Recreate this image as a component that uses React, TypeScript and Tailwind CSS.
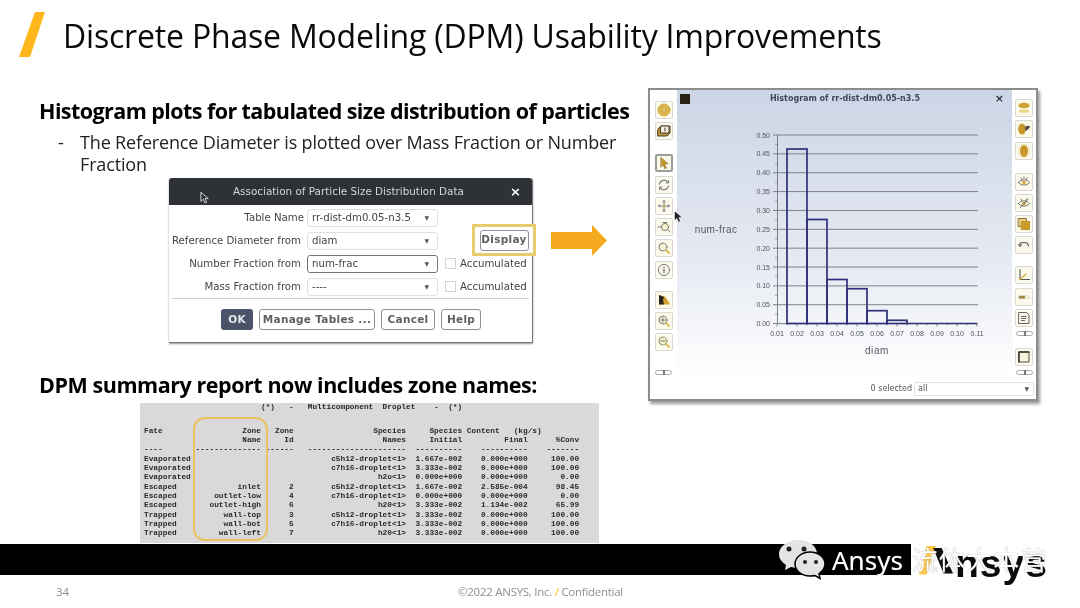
import type { ReactNode } from "react";

const gold = "#d9a92e";
const grey = "#7b7f7c";

function Ic({ children }: { children: ReactNode }) {
  return (
    <svg viewBox="0 0 14 14" className="h-[14px] w-[14px]" fill="none" strokeLinecap="round" strokeLinejoin="round">
      {children}
    </svg>
  );
}

const leftTools: ReactNode[][] = [
  [
    <Ic><circle cx="7" cy="7" r="6" fill="#e6c566" stroke={gold} /><circle cx="7" cy="7" r="2.5" stroke="#b98f28" strokeDasharray="1 1" /><circle cx="7" cy="7" r="4.6" stroke="#c49a30" strokeDasharray="1 1.2" /></Ic>,
    <Ic><path d="M1 5l3-3h9v7l-3 3H1z" fill="#b8922f" stroke="#4a4030" /><rect x="4" y="2" width="8" height="7" fill="#f6f3e4" stroke="#4a4030" /><path d="M8 4v3" stroke="#333" /></Ic>,
  ],
  [
    <Ic><path d="M4 1.5l7 6.3-3.3.3 1.7 4-1.6.6-1.7-4L4 11z" fill="#c9992c" stroke="#8c7130" strokeWidth=".6" /></Ic>,
    <Ic><path d="M2.5 6A4.6 4.6 0 0 1 11 4.5M11.5 8A4.6 4.6 0 0 1 3 9.5" stroke={grey} strokeWidth="1.2" /><path d="M11.5 2.5v2.4H9M2.5 11.5V9.1H5" stroke={grey} /></Ic>,
    <Ic><path d="M7 1.5v11M1.5 7h11M5.8 3L7 1.5 8.2 3M5.8 11L7 12.5 8.2 11M3 5.8L1.5 7 3 8.2M11 5.8L12.5 7 11 8.2" stroke={grey} /><circle cx="7" cy="7" r="1" fill={gold} /></Ic>,
    <Ic><circle cx="8" cy="7" r="3.6" stroke={grey} fill="#f7efc9" /><path d="M1 7h3M10.6 9.6l2.4 2.4M6 2.5h4" stroke={grey} /></Ic>,
    <Ic><circle cx="6" cy="6" r="4" stroke={grey} fill="#f6f0cf" /><path d="M9 9l3.2 3.2" stroke={gold} strokeWidth="1.4" /></Ic>,
    <Ic><circle cx="7" cy="7" r="5.6" stroke={grey} fill="#f8f6ea" /><path d="M7 6.2v3.6" stroke="#666" strokeWidth="1.2" /><circle cx="7" cy="4.2" r=".7" fill="#666" /></Ic>,
  ],
  [
    <Ic><path d="M2 2l6 1.5 4.5 6.5V11.5H2z" fill="#d2a02a" /><path d="M2 2l5 2-1 3 1 4.500H2z" fill="#2b2418" /></Ic>,
    <Ic><circle cx="6" cy="6" r="4" stroke={grey} fill="#f4eecb" /><path d="M4 6h4M6 4v4" stroke={grey} /><path d="M9 9l3.200 3.200" stroke={gold} strokeWidth="1.400" /></Ic>,
    <Ic><circle cx="6" cy="6" r="4" stroke="#8a9a6a" fill="#f4eecb" /><path d="M4 6h4" stroke={grey} /><path d="M9 9l3.200 3.200" stroke={gold} strokeWidth="1.400" /></Ic>,
  ],
];

const rightTools: ReactNode[][] = [
  [
    <Ic><ellipse cx="7" cy="4.500" rx="5.500" ry="2.800" fill="#caa033" /><ellipse cx="7" cy="10" rx="5.500" ry="1.800" fill="#e9d48a" /></Ic>,
    <Ic><ellipse cx="5" cy="7" rx="3.800" ry="5.500" fill="#c6982a" /><path d="M8 5c2-1.500 4-1.500 5-.5-.5 2-2.500 4-5 4.500z" fill="#55503f" /></Ic>,
    <Ic><ellipse cx="7" cy="7" rx="4" ry="6" fill="#c9982a" /><ellipse cx="7" cy="7" rx="5.500" ry="6.500" stroke="#eadca8" /></Ic>,
  ],
  [
    <Ic><path d="M1.500 7.500C4 4 10 4 12.500 7.500 10 11 4 11 1.500 7.500z" stroke="#6f6f66" /><circle cx="7" cy="7.500" r="1.800" fill={gold} /><path d="M4 3l.7 1.500M7 2v1.600M10 3l-.7 1.500" stroke="#6f6f66" /></Ic>,
    <Ic><path d="M1.500 7.500C4 4 10 4 12.500 7.500 10 11 4 11 1.500 7.500z" stroke="#6f6f66" /><circle cx="7" cy="7.500" r="1.800" fill={gold} /><path d="M3 12L11 3M4 3l.7 1.500M10 3l-.7 1.500" stroke="#6f6f66" /></Ic>,
    <Ic><rect x="1.500" y="1.500" width="8" height="8" fill="#e9cf80" stroke="#8a7430" /><rect x="4.500" y="4.500" width="8" height="8" fill="#cb9c28" stroke="#b8922f" /></Ic>,
    <Ic><path d="M3 8V6.500Q3 4.500 6 4.500H8Q11 4.500 11.500 8" stroke="#55554f" strokeWidth="1.200" /><path d="M1.500 6.500L3 8.500 4.800 6.800" stroke="#55554f" /></Ic>,
  ],
  [
    <Ic><path d="M3 1.500V11.500H12.500" stroke="#55554f" strokeWidth="1.100" /><path d="M3 11.500L9 6" stroke={gold} strokeWidth="1.200" /></Ic>,
    <Ic><rect x="1" y="5.500" width="12" height="3.400" rx="1.700" fill="#f0ecd8" stroke="#ddd" strokeWidth=".6" /><rect x="2" y="5.800" width="6" height="2.800" fill="#a08a48" /></Ic>,
    <Ic><path d="M2 1.500H9.500L12 4V12.500H2z" stroke="#66665f" fill="#f8f6ea" /><path d="M4.500 5.500H9M4.500 7.500H9M4.500 9.500H7.500" stroke="#66665f" /></Ic>,
  ],
];

function ToolButton({ children, active }: { children: ReactNode; active?: boolean }) {
  return (
    <div
      className={
        active
          ? "flex h-[18px] w-[18px] items-center justify-center rounded-[2px] border-2 border-[#9a9c9c] bg-[#faf8e6]"
          : "flex h-[18px] w-[18px] items-center justify-center rounded-[2px] border border-[#d9d9d2] bg-[#fbfaec]"
      }
    >
      {children}
    </div>
  );
}

function MiniSlider() {
  return (
    <div className="relative h-[5px] w-[17px] rounded-full border border-[#a9a9a9] bg-white">
      <div className="absolute left-[7px] top-[-1px] h-[5px] w-[2px] bg-[#777]" />
    </div>
  );
}

const ticksY = ["0.50", "0.45", "0.40", "0.35", "0.30", "0.25", "0.20", "0.15", "0.10", "0.05", "0.00"];
const ticksX = ["0.01", "0.02", "0.03", "0.04", "0.05", "0.06", "0.07", "0.08", "0.09", "0.10", "0.11"];
const bars = [
  [787, 149],
  [807, 219.500],
  [827, 279.500],
  [847, 288.700],
  [867, 310.700],
  [887, 320.300],
];

function Chart() {
  const y0 = 323.500;
  const yStep = 18.860;
  return (
    <svg viewBox="677 111 335 267" className="block h-[267px] w-[335px]">
      {ticksY.map((t, i) => {
        const y = 135 + i * yStep;
        return (
          <g key={t}>
            <line x1="773" x2="978" y1={y} y2={y} stroke="#7d828a" strokeWidth="1" />
            <text x="770" y={y + 2.500} textAnchor="end" fontSize="7" fill="#4f535a" fontFamily="Liberation Sans">{t}</text>
            {i < 10 && <line x1="775" x2="778" y1={y + yStep / 2} y2={y + yStep / 2} stroke="#83888f" strokeWidth="0.700" />}
          </g>
        );
      })}
      <line x1="777.500" x2="777.500" y1="135" y2={y0} stroke="#6f747c" strokeWidth="0.900" />
      {ticksX.map((t, i) => {
        const x = 777 + i * 20;
        return (
          <g key={t}>
            <line x1={x} x2={x} y1={y0} y2={y0 + 3} stroke="#6f747c" strokeWidth="0.800" />
            {i < 10 && <line x1={x + 10} x2={x + 10} y1={y0} y2={y0 + 2} stroke="#6f747c" strokeWidth="0.600" />}
            <text x={x} y="336" textAnchor="middle" fontSize="7" fill="#4f535a" fontFamily="Liberation Sans">{t}</text>
          </g>
        );
      })}
      {bars.map(([x, y]) => (
        <rect key={x} x={x} y={y} width="20" height={y0 - y} fill="none" stroke="#2f3178" strokeWidth="1.700" />
      ))}
      <line x1="907" x2="977" y1={y0} y2={y0} stroke="#2f3178" strokeWidth="1.400" />
      <text x="716" y="232.500" textAnchor="middle" fontSize="10" letterSpacing="0.400" fill="#555a60" fontFamily="Liberation Sans">num-frac</text>
      <text x="877" y="353.500" textAnchor="middle" fontSize="10" letterSpacing="0.600" fill="#555a60" fontFamily="Liberation Sans">diam</text>
    </svg>
  );
}

function HistogramWindow() {
  return (
    <div className="mt-[18px] flex h-[313px] w-[390px] flex-col border-2 border-[#8c8c8c] bg-white shadow-[2px_3px_3px_#9a9a9a]">
      <div className="flex h-[288px]">
        <div className="flex w-[27px] flex-col items-center pt-[11px]">
          <div className="flex flex-col gap-[3.300px]">
            {leftTools[0].map((ic, i) => <ToolButton key={i}>{ic}</ToolButton>)}
          </div>
          <div className="mt-[14px] flex flex-col gap-[3.300px]">
            {leftTools[1].map((ic, i) => <ToolButton key={i} active={i === 0}>{ic}</ToolButton>)}
          </div>
          <div className="mt-[12px] flex flex-col gap-[3.300px]">
            {leftTools[2].map((ic, i) => <ToolButton key={i}>{ic}</ToolButton>)}
          </div>
          <div className="mt-[19px]"><MiniSlider /></div>
        </div>
        <div className="flex w-[335px] flex-col bg-gradient-to-b from-[#ccd5e6] via-[#e6eaf2] via-60% to-white">
          <div className="flex h-[21px] items-center pl-[3px] pr-[8px]">
            <div className="-mt-[4px] h-[10px] w-[10px] bg-[#2a2317]" />
            <p className="-mt-[3px] ml-[80px] w-[227px] font-['DejaVu_Sans'] text-[8px] font-bold text-[#3f4a58]">Histogram of rr-dist-dm0.05-n3.5</p>
            <span className="-mt-[3px] font-['DejaVu_Sans'] text-[11px] font-bold text-[#2d3138]">×</span>
          </div>
          <Chart />
        </div>
        <div className="flex w-[24px] flex-col items-center pt-[9px]">
          <div className="flex flex-col gap-[3.300px]">
            {rightTools[0].map((ic, i) => <ToolButton key={i}>{ic}</ToolButton>)}
          </div>
          <div className="mt-[13px] flex flex-col gap-[3.300px]">
            {rightTools[1].map((ic, i) => <ToolButton key={i}>{ic}</ToolButton>)}
          </div>
          <div className="mt-[12px] flex flex-col gap-[3.300px]">
            {rightTools[2].map((ic, i) => <ToolButton key={i}>{ic}</ToolButton>)}
          </div>
          <div className="mt-[4px]"><MiniSlider /></div>
          <div className="mt-[12px]">
            <ToolButton>
              <Ic><rect x="2" y="2" width="10" height="10" fill="#f8f3d6" stroke="#55554f" /><path d="M2 12V2h10" stroke="#333" strokeWidth="1.400" /></Ic>
            </ToolButton>
          </div>
          <div className="mt-[4px]"><MiniSlider /></div>
        </div>
      </div>
      <div className="flex flex-1 items-center justify-end pr-[2px] font-['DejaVu_Sans'] text-[8px] text-[#555]">
        <span className="mr-[2px] font-medium">0 selected</span>
        <div className="flex h-[14px] w-[120px] items-center justify-between rounded-[2px] border border-[#e2e2e2] pl-[3px] pr-[4px]">
          <span>all</span>
          <span className="text-[6px]">▼</span>
        </div>
      </div>
    </div>
  );
}

function Select({ label, value, focus, wide }: { label: string; value: string; focus?: boolean; wide?: boolean }) {
  return (
    <div className="flex h-[23px] items-center">
      <span className={wide ? "w-[135px] whitespace-nowrap text-right" : "w-[132px] whitespace-nowrap text-right"}>{label}</span>
      <div
        className={
          (wide ? "ml-[3px] " : "ml-[6px] ") +
          (focus
            ? "flex h-[18px] w-[131px] items-center justify-between rounded-[3px] border border-[#777] bg-white pl-[4px] pr-[8px]"
            : "flex h-[18px] w-[131px] items-center justify-between rounded-[3px] border border-[#e0e0e0] bg-white pl-[4px] pr-[8px]")
        }
      >
        <span>{value}</span>
        <span className="text-[6px] text-[#555]">▼</span>
      </div>
    </div>
  );
}

function Accumulated() {
  return (
    <div className="ml-[7px] flex items-center gap-[4px] whitespace-nowrap">
      <span className="h-[11px] w-[11px] border border-[#d4d4d4] bg-white" />
      <span>Accumulated</span>
    </div>
  );
}

function Dialog() {
  const btn = "flex h-[21px] items-center justify-center rounded-[3px] border border-[#8f9296] font-['DejaVu_Sans'] text-[10.500px] font-bold tracking-[0.300px] text-[#606060]";
  return (
    <div className="relative ml-[130px] mt-[3px] h-[165px] w-[364px] rounded-t-[3px] border-b border-r border-[#777] bg-white font-['DejaVu_Sans'] text-[10.200px] text-[#444] shadow-[0_1px_2px_#999]">
      <div className="flex h-[27px] items-center justify-between rounded-t-[3px] bg-[#2e3136] pl-[64px] pr-[11px] text-[10.400px] font-medium text-[#d4d6d8]">
        <span>Association of Particle Size Distribution Data</span>
        <span className="text-[13px] font-bold text-white">×</span>
      </div>
      <div className="pt-[1px]">
        <Select label="Table Name" value="rr-dist-dm0.05-n3.5" wide />
        <Select label="Reference Diameter from" value="diam" />
        <div className="flex">
          <Select label="Number Fraction from" value="num-frac" focus />
          <Accumulated />
        </div>
        <div className="flex">
          <Select label="Mass Fraction from" value="----" />
          <Accumulated />
        </div>
      </div>
      <div className="mx-[3px] h-px bg-[#cfcfcf]" />
      <div className="ml-[52px] mt-[10px] flex gap-[6px]">
        <div className="flex h-[21px] w-[32px] items-center justify-center rounded-[3px] bg-[#4a5368] text-[10.500px] font-bold tracking-[0.300px] text-[#e6e8ee]">OK</div>
        <div className={btn + " w-[116px]"}>Manage Tables ...</div>
        <div className={btn + " w-[54px]"}>Cancel</div>
        <div className={btn + " w-[40px]"}>Help</div>
      </div>
      {/* callout round the Display button, and the arrow to the plot */}
      <div className="absolute left-[303px] top-[46px] flex h-[32px] w-[64px] items-center justify-center border-[3px] border-[#e9ca6c] bg-white">
        <div className="flex h-[21px] w-[49px] items-center justify-center rounded-[3px] border border-[#8f9296] text-[10.500px] font-bold tracking-[0.300px] text-[#606060]">Display</div>
      </div>
      <svg viewBox="0 0 56 31" className="absolute left-[382px] top-[47px] h-[31px] w-[56px]">
        <path d="M0 7H41V0L56 15.500 41 31V24H0z" fill="#f5a91e" />
      </svg>
      {/* mouse pointer caught in the screenshot */}
      <svg viewBox="0 0 12 16" className="absolute left-[31px] top-[13px] h-[14px] w-[10px]">
        <path d="M1 1v11l3-2.500 2 4.500 2-1-2-4.300h4z" fill="#30343a" stroke="#e8e8e8" />
      </svg>
    </div>
  );
}

const pad = (s: string, n: number) => s.padStart(n, " ");
const tableRow = (fate: string, zone: string, id: string, names: string, init: string, final: string, conv: string) =>
  fate.padEnd(10, " ") + pad(zone, 15) + pad(id, 7) + pad(names, 24) + pad(init, 12) + pad(final, 14) + pad(conv, 11);

const reportLines = [
  "Fate".padEnd(10, " ") + pad("Zone", 15) + pad("Zone", 7) + pad("Species", 24) + pad("Species", 12) + " Content   (kg/s)",
  tableRow("", "Name", "Id", "Names", "Initial", "Final", "%Conv"),
  tableRow("----", "--------------", "------", "---------------------", "----------", "----------", "-------"),
  tableRow("Evaporated", "", "", "c5h12-droplet<1>", "1.667e-002", "0.000e+000", "100.00"),
  tableRow("Evaporated", "", "", "c7h16-droplet<1>", "3.333e-002", "0.000e+000", "100.00"),
  tableRow("Evaporated", "", "", "h2o<1>", "0.000e+000", "0.000e+000", "0.00"),
  tableRow("Escaped", "inlet", "2", "c5h12-droplet<1>", "1.667e-002", "2.585e-004", "98.45"),
  tableRow("Escaped", "outlet-low", "4", "c7h16-droplet<1>", "0.000e+000", "0.000e+000", "0.00"),
  tableRow("Escaped", "outlet-high", "6", "h20<1>", "3.333e-002", "1.134e-002", "65.99"),
  tableRow("Trapped", "wall-top", "3", "c5h12-droplet<1>", "3.333e-002", "0.000e+000", "100.00"),
  tableRow("Trapped", "wall-bot", "5", "c7h16-droplet<1>", "3.333e-002", "0.000e+000", "100.00"),
  tableRow("Trapped", "wall-left", "7", "h20<1>", "3.333e-002", "0.000e+000", "100.00"),
];

function Report() {
  const mono = "font-['Liberation_Mono'] text-[7.800px] font-bold leading-[9.330px] text-[#2a2a2a]";
  return (
    <div className="relative ml-[101px] mt-[3px] h-[140px] w-[459px] bg-[#d9d9d9] pl-[4px]">
      <pre className={mono}>{"                         (*)   -   Multicomponent  Droplet    -  (*)"}</pre>
      <pre className={mono + " mt-[14.300px]"}>{reportLines.join("\n")}</pre>
      <div className="absolute left-[53px] top-[14px] h-[124px] w-[75px] rounded-[12px] border-2 border-[#ecc15f]" />
    </div>
  );
}

export default function App() {
  return (
    <div className="relative flex h-[608px] w-[1080px] flex-col overflow-hidden bg-white font-['Open_Sans',sans-serif] text-black blur-[0.350px]">
      <header className="flex h-[70px] pl-[19px] pt-[12px]">
        <svg viewBox="0 0 26 45" className="h-[45px] w-[26px]">
          <path d="M16 0H26L11 45H0z" fill="#ffb71b" />
        </svg>
        <h1 className="ml-[18px] mt-[3px] whitespace-nowrap text-[32px] leading-[42px] tracking-[-0.190px] text-[#0a0a0a]">
          Discrete Phase Modeling (DPM) Usability Improvements
        </h1>
      </header>

      <main className="flex h-[474px]">
        <div className="w-[648px] pl-[39px] pt-[26px]">
          <h2 className="whitespace-nowrap text-[21.500px] font-bold leading-[30px] tracking-[-0.570px]">
            Histogram plots for tabulated size distribution of particles
          </h2>
          <div className="mt-[5px] flex text-[18px] leading-[22px] tracking-[-0.160px] text-[#222]">
            <span className="ml-[19px] w-[22px]">-</span>
            <p className="w-[545px]">The Reference Diameter is plotted over Mass Fraction or Number Fraction</p>
          </div>
          <Dialog />
          <h2 className="mt-[27px] whitespace-nowrap text-[21.500px] font-bold leading-[30px] tracking-[-0.450px]">
            DPM summary report now includes zone names:
          </h2>
          <Report />
        </div>
        <HistogramWindow />
      </main>

      <div className="h-[31px] w-[911px] bg-black" />

      <footer className="flex flex-1 items-start pl-[56px] pt-[8px] text-[11.500px] text-[#8f8f8f]">
        <span className="w-[402px]">34</span>
        <span className="tracking-[-0.270px]">
          ©2022 ANSYS, Inc. <span className="text-[#ffb71b]">/</span> Confidential
        </span>
      </footer>

      {/* Ansys logo with the WeChat watermark across it */}
      <div className="absolute left-[918px] top-[546px] flex items-start">
        <svg viewBox="0 0 36 38" className="h-[36px] w-[36px]">
          <path d="M8 0H18L8 30H0z" fill="#ffb71b" opacity="0.800" />
          <path d="M15 2H24L36 29H26z" fill="#111" />
        </svg>
        <span className="ml-[1px] mt-[-4px] font-['Liberation_Sans'] text-[39px] font-bold leading-[44px] tracking-[1px] text-[#0b0b0b]">nsys</span>
      </div>
      <div className="absolute left-[778px] top-[539px] flex items-center">
        <svg viewBox="0 0 48 42" className="h-[42px] w-[48px]">
          <path d="M20 1C9 1 1 8 1 15c0 5 3 8 7 11l-1 5 6-3c2 .5 5 1 7 1 11 0 19-6 19-14S31 1 20 1z" fill="#e4e4e4" />
          <circle cx="11" cy="10" r="2.500" fill="#222" />
          <circle cx="26" cy="10" r="2.500" fill="#222" />
          <path d="M32 13c-9 0-15 6-15 12s6 12 15 12c2 0 3 0 5-.5l5 3-1-5c3-2 6-5 6-9.500 0-6-6-12-15-12z" fill="#e4e4e4" stroke="#000" strokeWidth="1.500" />
          <circle cx="27" cy="23" r="2" fill="#222" />
          <circle cx="38" cy="23" r="2" fill="#222" />
        </svg>
        <span className="ml-[6px] whitespace-nowrap font-['Noto_Sans','Noto_Sans_CJK_SC',sans-serif] text-[26px] leading-[36px] text-white [text-shadow:0_0_1px_#777]">
          Ansys <span className="ml-[2px] tracking-[1.200px]">流体大本营</span>
        </span>
      </div>
      {/* arrow pointer left over the plot window */}
      <svg viewBox="0 0 12 16" className="absolute left-[674px] top-[210px] h-[13px] w-[9px]">
        <path d="M1 1v12l3-3 2 5 2-1-2-5h4z" fill="#222" />
      </svg>
    </div>
  );
}
